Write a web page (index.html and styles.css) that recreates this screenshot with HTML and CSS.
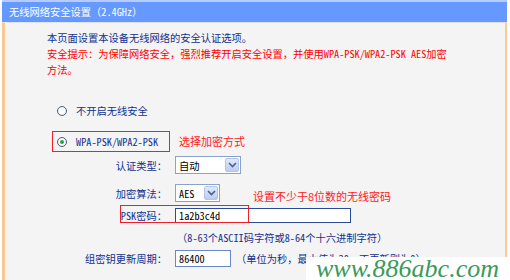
FILE: index.html
```html
<!DOCTYPE html>
<html lang="zh-CN">
<head>
    <meta charset="UTF-8">
    <title>无线网络安全设置</title>
    <link rel="stylesheet" href="styles.css">
</head>
<body>
    <div class="panel">
        <div class="panel-head">无线网络安全设置（2.4GHz）</div>
        <div class="panel-body">
            <p class="intro">本页面设置本设备无线网络的安全认证选项。</p>
            <p class="warn">安全提示：为保障网络安全，强烈推荐开启安全设置，并使用WPA-PSK/WPA2-PSK AES加密<br>方法。</p>

            <!-- security mode -->
            <div class="radio-row">
                <span class="radio"></span>
                <span>不开启无线安全</span>
            </div>
            <div class="radio-row">
                <div class="mark-box">
                    <span class="radio checked"></span>
                    <span>WPA-PSK/WPA2-PSK</span>
                </div>
                <span class="note">选择加密方式</span>
            </div>

            <!-- settings -->
            <div class="form-row first">
                <label class="form-label">认证类型：</label>
                <div class="select wide"><span>自动</span><span class="select-btn"><svg width="9" height="6" viewBox="0 0 9 6"><path d="M1 1l3.5 3.5L8 1" fill="none" stroke="#4d6185" stroke-width="1.6"/></svg></span></div>
            </div>
            <div class="form-row">
                <label class="form-label">加密算法：</label>
                <div class="select narrow"><span>AES</span><span class="select-btn"><svg width="9" height="6" viewBox="0 0 9 6"><path d="M1 1l3.5 3.5L8 1" fill="none" stroke="#4d6185" stroke-width="1.6"/></svg></span></div>
            </div>
            <div class="form-row psk">
                <span class="note pwd-note">设置不少于8位数的无线密码</span>
                <span class="pwd-box"></span>
                <label class="form-label">PSK密码：</label>
                <div class="text-input long">1a2b3c4d</div>
            </div>
            <div class="form-row hint-row">
                <span></span>
                <span class="hint">（8-63个ASCII码字符或8-64个十六进制字符）</span>
            </div>
            <div class="form-row group">
                <label class="form-label">组密钥更新周期：</label>
                <div class="inline">
                    <div class="text-input short">86400</div>
                    <span class="hint">（单位为秒，最小值为30，不更新则为0）</span>
                </div>
            </div>
        </div>
    </div>

    <div class="watermark">www.886abc.com</div>
</body>
</html>
```

FILE: styles.css
```css
body {
    margin: 0;
    background-color: #ffffff;
    font-family: "Noto Sans Mono CJK SC", "Noto Sans CJK SC", sans-serif;
    font-size: 10.25px;
    color: #13318f;
    overflow: hidden;
}

.panel {
    margin-left: 2px;
    width: 505px;
    height: 280px;
    display: flex;
    flex-direction: column;
}

.panel-head {
    height: 20px;
    line-height: 20px;
    border-top: 2px solid #b6ccfd;
    background-color: #6699ff;
    color: #ffffff;
    padding-left: 7px;
}

.panel-body {
    flex: 1;
    border-top: 1px solid #dfe4ee;
    border-left: 3px solid #fbc890;
    border-right: 2px solid #fbc890;
    background-color: #f4f4f4;
    padding: 7px 0 0 42px;
}

p {
    margin: 0;
    line-height: 16px;
}

.warn {
    color: #ff0000;
}

.radio-row {
    display: flex;
    align-items: center;
    height: 21px;
    margin-left: 10px;
    margin-top: 22px;
}

.radio-row + .radio-row {
    margin-top: 10px;
    margin-left: 5px;
}

.radio-row > span:last-child,
.mark-box > span:last-child {
    margin-left: 9px;
}

.mark-box {
    display: flex;
    align-items: center;
    width: 112px;
    height: 19px;
    border: 1px solid #f0202a;
    padding-left: 4px;
}

.radio {
    width: 8px;
    height: 8px;
    border: 1px solid #4b5f7d;
    border-radius: 50%;
    background: radial-gradient(circle, #ffffff 40%, #dde3ea 100%);
    display: flex;
    align-items: center;
    justify-content: center;
}

.radio.checked::after {
    content: "";
    width: 4px;
    height: 4px;
    border-radius: 50%;
    background-color: #27a33b;
}

.note {
    font-family: "Noto Sans CJK SC", sans-serif;
    font-size: 11px;
    color: #ff1a1a;
}

.radio-row .note {
    margin-left: 3px;
    margin-top: -2px;
}

.form-row {
    display: grid;
    grid-template-columns: 120px auto;
    column-gap: 8px;
    align-items: center;
    height: 18px;
    margin-top: 10px;
    position: relative;
}

.form-row.first {
    margin-top: 4px;
}

.form-label {
    text-align: right;
}

.select {
    height: 16px;
    border: 1px solid #8aa4c9;
    background-color: #ffffff;
    display: flex;
    align-items: center;
    justify-content: space-between;
    color: #000000;
    padding-left: 3px;
}

.select.wide {
    width: 61px;
}

.select.narrow {
    width: 40px;
}

.select-btn {
    width: 14px;
    height: 14px;
    margin-right: 1px;
    border: 1px solid #b3c5ec;
    border-radius: 2px;
    background: linear-gradient(#dfe8fb, #bccdf4);
    display: flex;
    align-items: center;
    justify-content: center;
    box-sizing: border-box;
}

.form-row.psk {
    height: 15px;
    margin-top: 6px;
}

.text-input {
    height: 13px;
    line-height: 13px;
    border: 1px solid #2b4a9a;
    background-color: #ffffff;
    color: #000000;
    padding-left: 3px;
}

.text-input.long {
    width: 171px;
}

.text-input.short {
    width: 51px;
    height: 15px;
    line-height: 15px;
    border-color: #6a89c4;
}

.pwd-note {
    position: absolute;
    left: 206px;
    top: -20px;
}

.pwd-box {
    position: absolute;
    left: 73px;
    top: -3px;
    width: 127px;
    height: 16px;
    border: 1px solid #f0202a;
}

.form-row.hint-row {
    height: 16px;
    margin-top: 6px;
}

.hint-row .hint {
    margin-left: 2px;
}

.form-row.group {
    height: 17px;
    margin-top: 5px;
}

.inline {
    display: flex;
    align-items: center;
}

.inline .hint {
    margin-left: 5px;
}

.watermark {
    position: absolute;
    right: 0;
    bottom: 0;
    width: 194px;
    height: 23px;
    background-color: #ffffff;
    font-family: "Liberation Serif", serif;
    font-style: italic;
    font-size: 26px;
    line-height: 23px;
    color: #3a9a5a;
    padding-left: 10px;
    white-space: nowrap;
    overflow: hidden;
}
```
